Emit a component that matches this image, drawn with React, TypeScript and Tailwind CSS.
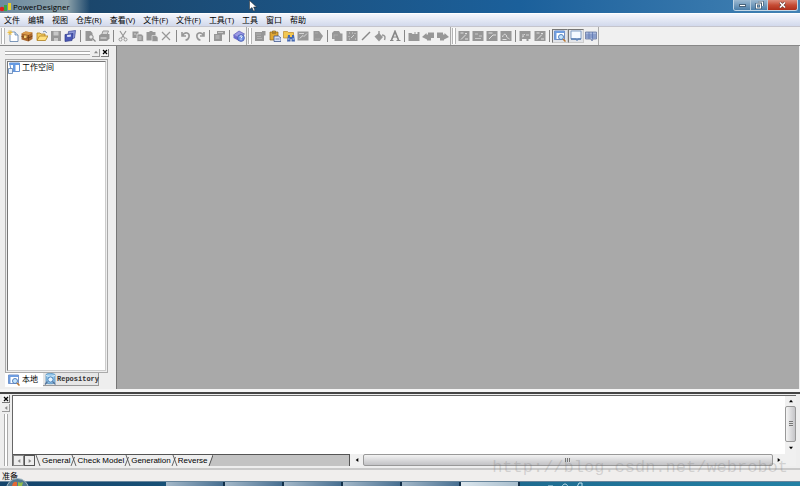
import type { ReactNode } from "react";

const menus = [
  "文件",
  "编辑",
  "视图",
  "仓库(R)",
  "查看(V)",
  "文件(F)",
  "文件(F)",
  "工具(T)",
  "工具",
  "窗口",
  "帮助",
];

const G = "#979797";

const icons: Record<string, ReactNode> = {
  new: (
    <>
      <path d="M3 2h5l3 3v6.500H3z" fill="#fff" stroke="#5d7fa8" strokeWidth=".8" />
      <path d="M8 2v3h3" fill="#c9dcf2" stroke="#5d7fa8" strokeWidth=".7" />
      <path d="M3 0v5M.5 2.500h5M1.200 .8l3.600 3.600M4.800 .8 1.200 4.400" stroke="#eebd3c" strokeWidth=".9" />
    </>
  ),
  project: (
    <>
      <path d="M.5 3.500l4-2 7 1v6.500l-4 2.500-7-2z" fill="#a9672d" />
      <path d="M.5 3.500l4-2 7 1-4 2.500z" fill="#d99a4c" />
      <path d="M7.500 5v6M.5 6.500l7 1.500 4-2" stroke="#6f3f19" strokeWidth=".8" fill="none" />
      <path d="M3 5.500h2.500V8H3z" fill="#f4cf73" />
    </>
  ),
  open: (
    <>
      <path d="M1 10V3h3l1 1h4v2" fill="#f3cd62" stroke="#ad7d20" strokeWidth=".8" />
      <path d="M1 10.500 3.500 6H12l-2.500 4.500z" fill="#ffdf7d" stroke="#ad7d20" strokeWidth=".8" />
      <path d="M7 2c2-1.500 3-.5 3.500 1" stroke="#4c6d9c" fill="none" strokeWidth=".8" />
    </>
  ),
  save: (
    <>
      <path d="M1 1h10v10H1z" fill={G} />
      <path d="M3.500 1.500h5v4h-5zM4 8h4v3H4z" fill="#c8c8c8" />
    </>
  ),
  saveAll: (
    <>
      <path d="M4.500 1.500l7-1-1 7.500-7 2z" fill="#8c98d8" stroke="#3c4898" strokeWidth=".7" />
      <path d="M1 4.500l8-1-1 7-7 1z" fill="#4b59b6" stroke="#303b88" strokeWidth=".7" />
      <path d="M3 5l4-.5-.3 2.200-3.500.4z" fill="#dfe3fa" />
    </>
  ),
  preview: (
    <>
      <path d="M1.500 1h5l2 2v8h-7z" fill={G} />
      <circle cx="7" cy="7" r="2.200" fill="#e8e8e8" stroke="#8b8b8b" />
      <path d="m8.500 8.500 3 3" stroke="#8b8b8b" strokeWidth="1.300" />
    </>
  ),
  print: (
    <>
      <path d="M5 1h5.500L9 5H3.500z" fill="#d6d6d6" stroke={G} />
      <path d="M1 5.500 3 4h8.500v4.500L9 11H1z" fill={G} />
      <path d="M2.500 8h6" stroke="#e5e5e5" />
    </>
  ),
  cut: (
    <>
      <path d="M3 1l4.500 7M9 1 4.500 8" stroke={G} strokeWidth="1.200" />
      <circle cx="3.500" cy="9.500" r="1.500" fill="none" stroke={G} />
      <circle cx="8.500" cy="9.500" r="1.500" fill="none" stroke={G} />
    </>
  ),
  copy: (
    <>
      <path d="M.5 1.500h6V8h-6z" fill={G} />
      <path d="M5 4h4.500l2 2v5.500H5z" fill={G} stroke="#eee" strokeWidth=".7" />
      <path d="M6.500 7h3M6.500 9h3M2 4h2" stroke="#eee" strokeWidth=".7" />
    </>
  ),
  paste: (
    <>
      <path d="M.5 2h3V1h3v1h3v8.500h-9z" fill={G} />
      <path d="M6 5.500h4l2 2v4H6z" fill={G} stroke="#eee" strokeWidth=".6" />
    </>
  ),
  delete: <path d="m2 2 8 8M10 2l-8 8" stroke={G} strokeWidth="1.200" />,
  undo: (
    <path d="M2 2v4h4M2.500 5.500C5 1 10 3 9 7 8.500 9 7 10 5.500 10" fill="none" stroke={G} strokeWidth="1.600" />
  ),
  redo: (
    <path d="M10 2v4H6M9.500 5.500C7 1 2 3 3 7c.5 2 2 3 3.500 3" fill="none" stroke={G} strokeWidth="1.600" />
  ),
  props: (
    <>
      <path d="M4 1h8v3.500H9V11H1V4h3z" fill={G} />
      <path d="M5 2.500h5M2.500 6h4M2.500 8h4" stroke="#ddd" strokeWidth=".7" />
    </>
  ),
  help: (
    <>
      <path d="M.5 5l5.500-4 5.500 3L6 8z" fill="#9b9ae4" stroke="#5959b8" strokeWidth=".7" />
      <path d="M.5 5v3L6 11V8z" fill="#6b6acd" />
      <circle cx="8" cy="8" r="3.400" fill="#7190e3" stroke="#4251a6" strokeWidth=".7" />
      <path d="M7 7c0-2 2.500-1.500 2 0L8 8v.5M8 9.300v.8" stroke="#fff" fill="none" strokeWidth=".9" />
    </>
  ),
  sheet: (
    <>
      <path d="M1 2h7V1h3.500v4.500H10V11H1z" fill={G} />
      <path d="M2 4h5M3 6.500h4M3 8.500h5" stroke="#bbb" strokeWidth=".7" />
    </>
  ),
  pasteColor: (
    <>
      <path d="M1 2h2.500V1h3v1H9v8H1z" fill="#dfa735" stroke="#8b641c" strokeWidth=".7" />
      <path d="M3 3h4" stroke="#775b28" />
      <path d="M5 6h4.500L12 8v3.500H5z" fill="#d6e0f5" stroke="#40578e" strokeWidth=".8" />
      <path d="M6.500 9h4" stroke="#40578e" strokeWidth=".7" />
    </>
  ),
  find: (
    <>
      <path d="M.5 1.500h4l1 1h5V8H.5z" fill="#f2c752" stroke="#ba8728" strokeWidth=".7" />
      <path d="M5 5h2v2h2V5h2l1 6.500H8.500V9h-1v2.500H4z" fill="#4568b1" />
      <path d="M5 9h1.500M9.500 9H11" stroke="#c6d9fc" strokeWidth="1" />
    </>
  ),
  image: (
    <>
      <path d="M.5 1.500h11v9H.5z" fill={G} />
      <path d="M2 3.500h5M2.500 8.500 6 5.500l1 1 3-3" stroke="#ddd" fill="none" strokeWidth=".9" />
    </>
  ),
  pageFill: (
    <>
      <path d="M1.500 1H7l4 5-3 5H1.500z" fill={G} />
      <path d="M3 3h3M3 9h5" stroke="#bbb" fill="none" strokeWidth=".6" />
    </>
  ),
  group: (
    <>
      <path d="M1 3 3 1h5l1.500 2.500h2V11h-8V9H1z" fill={G} />
      <path d="M3 4.500v4M3 5h4" stroke="#bbb" strokeWidth=".6" />
    </>
  ),
  frame: (
    <>
      <path d="M.5 1h11v10H.5z" fill={G} />
      <path d="M3 3h1M6 3h1M9 3v1M3 6v1M3 9h1M8 5l-3 3M9 9h1" stroke="#ddd" strokeWidth=".9" />
    </>
  ),
  line: <path d="m2 10 8-8" stroke="#888" strokeWidth="1.500" />,
  fill: (
    <>
      <path d="M.5 6.500l4.500-3.500 4 4-4 4.500z" fill={G} />
      <path d="M5 6V1M8 5c3 0 3.500 2 2.500 5" fill="none" stroke={G} strokeWidth="1.400" />
    </>
  ),
  font: (
    <>
      <path d="M2.500 10 6 1.500 9.500 10" fill="none" stroke="#888" strokeWidth="1.700" />
      <path d="M3.500 7h5M1 10.500h3.500M7.500 10.500h4" stroke="#888" strokeWidth="1.200" />
    </>
  ),
  box: <path d="M.5 3h3l1 1h2V2h1v2h2V2h2v9H.5z" fill={G} />,
  back: <path d="M0 7l4.500-4v1.500H6V2.500h6V8H9v2.500H5V9.500z" fill={G} />,
  forward: <path d="M12 7 7.500 3v1.500H6V2.500H0V8h3v2.500h4V9.500z" fill={G} />,
  diagonal: (
    <>
      <path d="M.5 1h11v10H.5z" fill={G} />
      <path d="M2.500 3h3M3 9.500l5-5M7 3.500h2M7 9h3" stroke="#e0e0e0" strokeWidth="1" />
    </>
  ),
  rows: (
    <>
      <path d="M.5 1h11v10H.5z" fill={G} />
      <path d="M3 4h3M3 8.500h6M7 6h3" stroke="#d0d0d0" strokeWidth=".9" />
    </>
  ),
  corner: (
    <>
      <path d="M.5 1h11v10H.5z" fill={G} />
      <path d="M2.500 3h4M3 9l4-4h3" stroke="#e0e0e0" fill="none" strokeWidth="1" />
    </>
  ),
  curve: (
    <>
      <path d="M.5 1h11v10H.5z" fill={G} />
      <path d="M2.500 7c1-4 4-3 4-1s2 2 3 3M2.500 9.500h4" stroke="#e0e0e0" fill="none" strokeWidth="1" />
    </>
  ),
  link: (
    <>
      <path d="M.5 1h11v8H9.500v2h-2V9H3v2H.5z" fill={G} />
      <path d="M3 5h2l1-1M7 5h3M3 7l2-1" stroke="#ddd" strokeWidth=".9" fill="none" />
    </>
  ),
  browser: (
    <>
      <path d="M.5 1h10v8.500H.5z" fill="#fff" stroke="#5475b3" strokeWidth=".8" />
      <path d="M.5 1h10v2H.5zM.5 3h2v6.500h-2z" fill="#6e9de0" />
      <circle cx="7" cy="7" r="2.500" fill="#c4e4fb" stroke="#4776b7" strokeWidth=".9" />
      <path d="m9 9 2.500 2.500" stroke="#bb7831" strokeWidth="1.500" />
    </>
  ),
  output: (
    <>
      <path d="M1 1h10v8H8l-1 2-1-2H1z" fill="#f5f9ff" stroke="#7896c1" strokeWidth=".9" />
      <path d="M1 9h10" stroke="#446fa9" strokeWidth="1.300" />
    </>
  ),
  results: (
    <>
      <path d="M.5 2h11v7H8l-1 2-1-2H.5z" fill="#a7b7dc" stroke="#68789f" strokeWidth=".8" />
      <path d="M1 5h10M1 7h10M4 2v7M7.500 2v7" stroke="#5871ae" strokeWidth=".7" />
    </>
  ),
  workspace: (
    <>
      <path d="M1.500 1h10v8.500h-8z" fill="#fff" stroke="#5384cd" strokeWidth=".9" />
      <path d="M1.500 1h10v2h-10zM5 3h2.500v6.500H5z" fill="#669ae1" />
      <path d="M.5 6.500h4v5h-4z" fill="#e8f1ff" stroke="#597fae" strokeWidth=".8" />
    </>
  ),
  repo: (
    <>
      <path d="M2 1.500c3-2 7-1 9 0V10c-2 1-7 1-9 0z" fill="#8fc3e8" stroke="#4c88b8" strokeWidth=".7" />
      <path d="M2 2.500c2 1 7 1 9 0" stroke="#e0f3ff" fill="none" />
      <circle cx="6.500" cy="6.500" r="2.600" fill="#e5f5ff" stroke="#3f77b3" strokeWidth=".9" />
      <path d="m8.500 8.500 3 3M3.500 8.500 1 11.500" stroke="#567499" strokeWidth="1.300" />
    </>
  ),
};

const toolbars: { name: string; className: string; items: string[] }[] = [
  {
    name: "标准",
    className: "w-[247px]",
    items: [
      "new", "project", "open", "save", "saveAll", "|",
      "preview", "print", "|",
      "cut", "copy", "paste", "delete", "|",
      "undo", "redo", "|",
      "props", "|",
      "help",
    ],
  },
  {
    name: "图表",
    className: "w-[204px]",
    items: [
      "sheet", "pasteColor", "find", "image", "pageFill", "|",
      "group", "frame", "line", "fill", "font", "|",
      "box", "back", "forward",
    ],
  },
  {
    name: "窗口",
    className: "w-[148px]",
    items: [
      "diagonal", "rows", "corner", "curve", "|",
      "link", "diagonal", "|",
      "browser", "output", "results",
    ],
  },
];

const outputTabs = ["General", "Check Model", "Generation", "Reverse"];

const Icon = ({ name }: { name: string }) => (
  <svg viewBox="0 0 12 12" className="size-3 shrink-0" aria-hidden="true">
    {icons[name]}
  </svg>
);

const Toolbar = ({ name, className, items }: { name: string; className: string; items: string[] }) => (
  <div
    role="toolbar"
    aria-label={name}
    className={`flex h-full shrink-0 items-center border-r border-[#aaa] ${className}`}
  >
    <div className="ml-px mr-px h-4 w-1 shrink-0 border-x border-[#b5b5b5] bg-white" />
    {items.map((item, index) =>
      item === "|" ? (
        <div key={index} className="mx-[2px] h-3 w-px shrink-0 bg-[#888]" />
      ) : (
        <button
          key={index}
          aria-label={item}
          className={`flex h-[14px] min-w-0 flex-1 items-center justify-center ${
            item === "browser" || item === "output"
              ? "border border-[#777] border-r-[#ccc] border-b-[#ccc] bg-[#e2e4e8]"
              : ""
          }`}
        >
          <Icon name={item} />
        </button>
      ),
    )}
  </div>
);

const CloseButton = () => (
  <button
    aria-label="关闭"
    className="flex size-2 items-center justify-center border-r border-b border-[#777] bg-[#f4f4f4]"
  >
    <svg viewBox="0 0 6 6" className="size-[6px]">
      <path d="m1 1 4 4M5 1 1 5" stroke="#000" strokeWidth="1.300" />
    </svg>
  </button>
);

const Arrow = ({ dir, className }: { dir: "up" | "down" | "left" | "right"; className: string }) => {
  const paths = {
    up: "M0 5 3 1l3 4z",
    down: "M0 1h6L3 5z",
    left: "M5 0v6L1 3z",
    right: "M1 0v6l4-3z",
  };
  return (
    <button aria-label={dir} className={`flex items-center justify-center ${className}`}>
      <svg viewBox="0 0 6 6" className="size-1">
        <path d={paths[dir]} fill="currentColor" />
      </svg>
    </button>
  );
};

const TitleBar = () => (
  <header className="flex h-[13px] shrink-0 items-start justify-between bg-linear-to-r from-[#1b466b] from-10% via-[#1b609b] via-65% to-[#4282b4]">
    <div className="flex h-full w-[90px] items-center bg-linear-to-r from-[#6c8ba0] via-[#8ba0a9] via-75% to-transparent">
      <svg viewBox="0 0 12 12" className="size-3">
        <path d="M0 8h5" stroke="#333" />
        <circle cx="2" cy="8" r="2.300" fill="#d92222" />
        <path d="M4 4h3v6H4z" fill="#39a541" />
        <path d="M8 2h3v7H8z" fill="#ead02d" />
      </svg>
      <h1 className="ml-px font-['Open_Sans','Noto_Sans_CJK_SC',sans-serif] text-[8px] leading-3 text-black">
        PowerDesigner
      </h1>
    </div>
    <div className="mr-[2px] flex h-[11px] overflow-hidden rounded-b-[3px] border border-t-0 border-[#c3d7e6]">
      <button aria-label="最小化" className="flex w-[17px] items-center justify-center border-r border-[#b5cbdc] bg-linear-to-b from-[#9cb9d1] to-[#4c7fa9]">
        <span className="h-[3px] w-[7px] border border-[#49637a] bg-white" />
      </button>
      <button aria-label="还原" className="flex w-[17px] items-center justify-center border-r border-[#b5cbdc] bg-linear-to-b from-[#9cb9d1] to-[#4c7fa9]">
        <svg viewBox="0 0 9 8" className="h-2 w-[9px]" fill="none">
          <path d="M3.500 1h4v4M1.500 3h4v4h-4z" stroke="#344e64" strokeWidth="2.200" />
          <path d="M3.500 1h4v4M1.500 3h4v4h-4z" stroke="#fff" strokeWidth="1.100" />
        </svg>
      </button>
      <button aria-label="关闭窗口" className="flex w-[29px] items-center justify-center bg-linear-to-b from-[#dd8b7a] via-[#c64c35] to-[#ae2d19]">
        <svg viewBox="0 0 9 8" className="h-2 w-[9px]">
          <path d="m2 1.500 5 5M7 1.500l-5 5" stroke="#6b3830" strokeWidth="3" />
          <path d="m2 1.500 5 5M7 1.500l-5 5" stroke="#fff" strokeWidth="1.700" />
        </svg>
      </button>
    </div>
  </header>
);

const WorkspacePanel = () => (
  <aside className="flex w-[117px] shrink-0 flex-col border-r border-[#777] bg-[#eee] pr-[7px] pb-[2px] pl-[5px]">
    <div className="flex h-[13px] shrink-0 items-center">
      <div className="h-1 flex-1 border-y border-[#aaa] bg-white" />
      <Arrow dir="up" className="ml-[2px] size-2 border-r border-b border-[#999] text-[#888]" />
      <div className="ml-px">
        <CloseButton />
      </div>
    </div>
    <div className="mr-px flex-1 border border-[#aaa] bg-[#eee] p-px">
      <ul className="h-full border border-[#777] border-r-[#ccc] border-b-[#ccc] bg-white">
        <li className="flex items-center gap-[2px] text-[8px] leading-[10px]">
          <Icon name="workspace" />
          工作空间
        </li>
      </ul>
    </div>
    <div className="flex h-[14px] shrink-0 items-start text-[8px]">
      <button className="flex h-[14px] w-[38px] items-center gap-[2px] bg-white pl-[3px]">
        <Icon name="browser" />
        本地
      </button>
      <button className="flex h-[13px] w-14 items-center gap-px border-r border-b border-[#999] bg-[#e6e6e6] pl-px font-['Liberation_Mono',monospace] text-[7px] font-bold text-[#333]">
        <Icon name="repo" />
        Repository
      </button>
    </div>
  </aside>
);

const OutputPanel = () => (
  <section className="flex h-[73px] shrink-0 bg-[#eee] pr-1 pb-[2px]">
    <div className="flex w-3 shrink-0 flex-col items-center gap-px">
      <CloseButton />
      <Arrow dir="left" className="size-2 border-r border-b border-[#999] text-[#888]" />
      <div className="mt-px w-1 flex-1 border-x border-[#aaa] bg-white" />
    </div>
    <div className="flex min-w-0 flex-1 flex-col border-t border-l border-[#666]">
      <div className="flex flex-1">
        <div className="flex-1 bg-white" />
        <div className="flex w-[11px] flex-col bg-[#f0f0f0]">
          <Arrow dir="up" className="h-[10px] text-black" />
          <div className="flex flex-1 items-center justify-center rounded-xs border border-[#999] bg-linear-to-r from-[#f5f5f5] to-[#c5c5c8]">
            <span className="h-[6px] w-1 bg-[repeating-linear-gradient(#777_0_1px,#ddd_1px_2px)]" />
          </div>
          <Arrow dir="down" className="h-[12px] text-black" />
        </div>
      </div>
      <div className="flex h-[12px] shrink-0">
        <div className="flex w-[43%] items-stretch border-t border-r border-[#555] bg-[#c3c3c3]">
          <Arrow dir="left" className="w-[11px] border border-[#888] bg-[#eee] text-[#888]" />
          <Arrow dir="right" className="w-[11px] border border-[#555] bg-[#eee] text-[#888]" />
          <div role="tablist" className="flex bg-[#eee] font-['Liberation_Sans',sans-serif] text-[8px] leading-[11px]">
            {outputTabs.map((tab, index) => (
              <div key={tab} className="flex">
                <svg viewBox="0 0 7 11" className="h-[11px] w-[7px]">
                  <path
                    d={index === 0 ? "M1 0l4 11" : "M2 0l4 11M4.500 2 1 11"}
                    stroke="#444"
                    strokeWidth=".8"
                    fill="none"
                  />
                </svg>
                <button role="tab" aria-selected={index === 0} className="whitespace-nowrap">
                  {tab}
                </button>
              </div>
            ))}
          </div>
          <svg viewBox="0 0 5 11" className="h-[11px] w-[5px]">
            <path d="M0 0h5L1 11H0z" fill="#eee" />
            <path d="M5 0 1 11" stroke="#444" strokeWidth=".9" />
          </svg>
        </div>
        <div className="flex flex-1 bg-[#f0f0f0]">
          <Arrow dir="left" className="ml-px w-3 text-black" />
          <div className="flex flex-1 items-center justify-center rounded-xs border border-[#999] bg-linear-to-b from-[#f3f3f3] to-[#c2c2c5]">
            <span className="h-1 w-[6px] bg-[repeating-linear-gradient(90deg,#777_0_1px,#ddd_1px_2px)]" />
          </div>
          <Arrow dir="right" className="w-3 text-black" />
          <div className="w-[11px]" />
        </div>
      </div>
    </div>
  </section>
);

const taskButtons = [1, 2, 3, 4, 5, 6];

const Taskbar = () => (
  <footer className="relative flex h-[5px] shrink-0 border-t border-[#68859b] bg-linear-to-r from-[#15446b] to-[#2381a5]">
    <div className="w-[166px] shrink-0" />
    {taskButtons.map((n) => (
      <button
        key={n}
        aria-label={`任务 ${n}`}
        className={`w-[59px] border-r-2 border-[#12304a] bg-linear-to-r ${
          n === 6 ? "from-[#dbe6ed] to-[#a7bdcd]" : "from-[#a5b9c9] to-[#476f91]"
        }`}
      />
    ))}
    <svg viewBox="0 0 40 5" className="ml-6 h-[5px] w-10">
      <path d="M4 4h5M18 5c1-4 5-4 6 0M33 5l2-4h3v4" stroke="#c2e2ef" fill="none" />
    </svg>
    <button aria-label="开始" className="absolute bottom-0 left-[6px] h-2 w-[23px] overflow-hidden">
      <svg viewBox="0 0 23 8" className="h-2 w-[23px]">
        <ellipse cx="11.500" cy="11" rx="11" ry="10.500" fill="#52788f" stroke="#a5bac5" />
        <path d="M7 5c2-2 3-1 4-1v4H6z" fill="#e36835" />
        <path d="M12 4c2 1 3 1 5 0l-1 4h-4z" fill="#91bd4b" />
      </svg>
    </button>
  </footer>
);

const App = () => {
  return (
    <div className="relative flex h-screen flex-col overflow-hidden bg-[#eee] font-['Liberation_Sans','Noto_Sans_CJK_SC',sans-serif] text-black">
      <TitleBar />
      <nav className="flex h-[14px] shrink-0 items-center gap-2 border-t border-b border-t-white border-b-[#c5c5cd] bg-linear-to-b from-[#f4f6fc] to-[#d2d9ec] pl-1 font-['Open_Sans','Noto_Sans_CJK_SC',sans-serif] text-[8px] leading-3">
        {menus.map((menu, index) => (
          <button key={index} className="whitespace-nowrap">
            {menu}
          </button>
        ))}
      </nav>
      <div className="flex h-[19px] shrink-0 items-center border-b border-[#888] bg-[#f0f0f0]">
        {toolbars.map((bar) => (
          <Toolbar key={bar.name} {...bar} />
        ))}
      </div>

      <main className="flex min-h-0 flex-1">
        <WorkspacePanel />
        <div className="mr-px flex-1 bg-[#a9a9a9]" />
      </main>

      {/* Splitter */}
      <div className="h-[6px] shrink-0 border-t-3 border-b border-t-[#f5f5f5] border-b-[#eee] bg-[#444]" />
      <OutputPanel />
      <div className="h-[13px] shrink-0 border-t-2 border-[#c9c9c9] bg-[#f0eeed] pl-[2px] text-[8px] leading-[13px]">
        准备
      </div>
      <Taskbar />

      <p className="pointer-events-none absolute right-3 bottom-2 font-['Liberation_Mono',monospace] text-[17px] leading-5 text-[#777]/25">
        http://blog.csdn.net/webrobot
      </p>
      {/* Mouse pointer */}
      <svg viewBox="0 0 8 12" className="pointer-events-none absolute top-0 left-[249px] h-3 w-2">
        <path d="M.5.5v9L3 7.500 4.500 11l1.500-.6L4.600 7h3z" fill="#fff" stroke="#222" strokeWidth=".5" />
      </svg>
    </div>
  );
};

export default App;
